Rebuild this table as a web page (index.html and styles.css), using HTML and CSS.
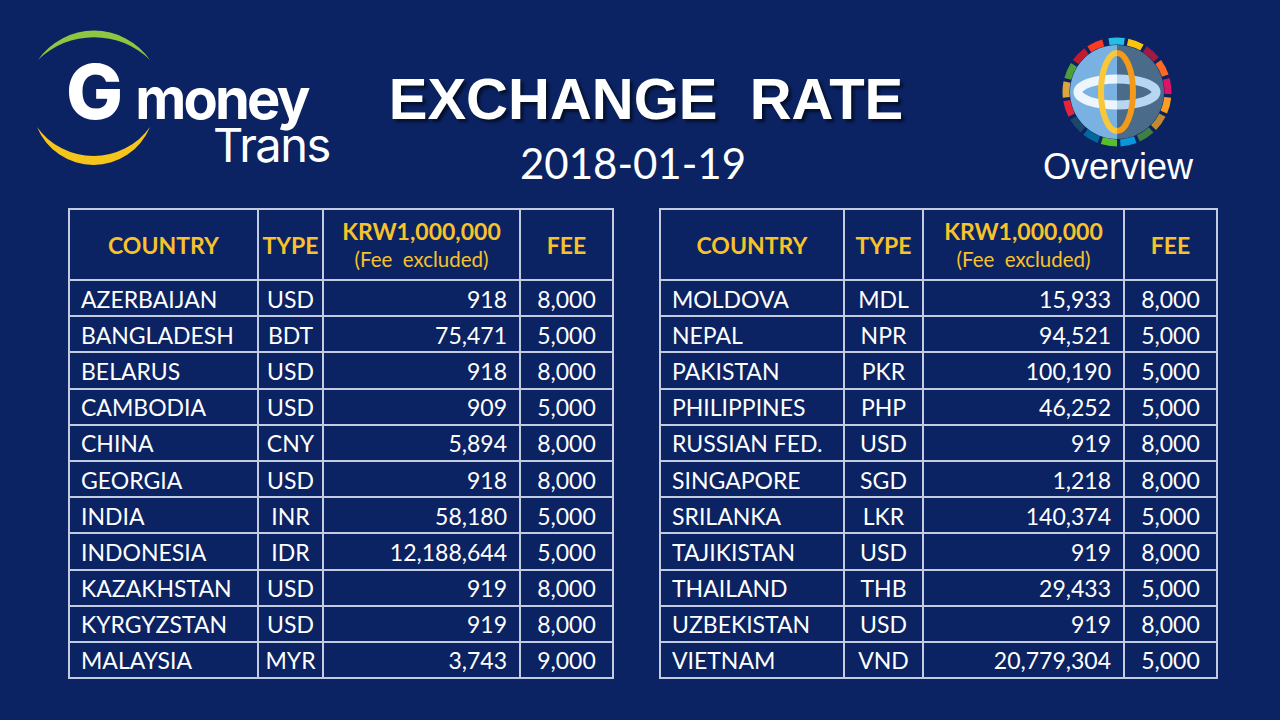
FILE: index.html
```html
<!DOCTYPE html>
<html>
<head>
<meta charset="utf-8">
<link rel="stylesheet" href="styles.css">
</head>
<body>
<div class="slide">
  <header class="header">
    <div class="logo">
      <svg class="logo-arcs" viewBox="0 0 336 208" width="336" height="208">
        <path d="M38,60 A68,68 0 0,1 150,60 A80,80 0 0,0 38,60 Z" fill="#8dc641"/>
        <path d="M37,127 A61,61 0 0,0 150,127 A69.5,69.5 0 0,1 37,127 Z" fill="#f6c51c"/>
      </svg>
      <div class="logo-line1"><span class="logo-g">G</span><span class="logo-money">money</span></div>
      <div class="logo-trans">Trans</div>
    </div>
    <div class="titles">
      <h1 class="title">EXCHANGE&nbsp; RATE</h1>
      <div class="date">2018-01-19</div>
    </div>
    <div class="overview">
      <svg class="globe" viewBox="0 0 110 110" width="110" height="110">
        <g fill="none" stroke-width="7" stroke-dasharray="15.4 305">
          <circle cx="55" cy="55" r="51" stroke="#26bde2" transform="rotate(-99 55 55)"/>
          <circle cx="55" cy="55" r="51" stroke="#fcc30b" transform="rotate(-78 55 55)"/>
          <circle cx="55" cy="55" r="51" stroke="#a21942" transform="rotate(-57 55 55)"/>
          <circle cx="55" cy="55" r="51" stroke="#fd6925" transform="rotate(-36 55 55)"/>
          <circle cx="55" cy="55" r="51" stroke="#dd1367" transform="rotate(-15 55 55)"/>
          <circle cx="55" cy="55" r="51" stroke="#fd9d24" transform="rotate(6 55 55)"/>
          <circle cx="55" cy="55" r="51" stroke="#bf8b2e" transform="rotate(27 55 55)"/>
          <circle cx="55" cy="55" r="51" stroke="#3f7e44" transform="rotate(48 55 55)"/>
          <circle cx="55" cy="55" r="51" stroke="#0a97d9" transform="rotate(69 55 55)"/>
          <circle cx="55" cy="55" r="51" stroke="#56c02b" transform="rotate(90 55 55)"/>
          <circle cx="55" cy="55" r="51" stroke="#00689d" transform="rotate(111 55 55)"/>
          <circle cx="55" cy="55" r="51" stroke="#19486a" transform="rotate(132 55 55)"/>
          <circle cx="55" cy="55" r="51" stroke="#e5243b" transform="rotate(153 55 55)"/>
          <circle cx="55" cy="55" r="51" stroke="#dda63a" transform="rotate(174 55 55)"/>
          <circle cx="55" cy="55" r="51" stroke="#4c9f38" transform="rotate(195 55 55)"/>
          <circle cx="55" cy="55" r="51" stroke="#c5192d" transform="rotate(216 55 55)"/>
          <circle cx="55" cy="55" r="51" stroke="#ff3a21" transform="rotate(237 55 55)"/>
        </g>
        <path d="M55,8 A47,47 0 0,0 55,102 Z" fill="#79b2e2"/>
        <path d="M55,8 A47,47 0 0,1 55,102 Z" fill="#4b6b8a"/>
        <path d="M55,42 A39,13 0 0,0 55,68" fill="none" stroke="#eef6fd" stroke-width="9"/>
        <path d="M55,42 A39,13 0 0,1 55,68" fill="none" stroke="#b7d6f2" stroke-width="9"/>
        <path d="M55,16 A16,39 0 0,0 55,94" fill="none" stroke="#f8c73a" stroke-width="6"/>
        <path d="M55,16 A16,39 0 0,1 55,94" fill="none" stroke="#f39a1b" stroke-width="6"/>
      </svg>
      <div class="overview-text">Overview</div>
    </div>
  </header>

  <main class="tables">
    <table class="rate rate-left">
      <colgroup><col class="c1"><col class="c2"><col class="c3"><col class="c4"></colgroup>
      <thead>
        <tr><th>COUNTRY</th><th>TYPE</th><th><span class="krw">KRW1,000,000</span><span class="excl">(Fee&nbsp; excluded)</span></th><th>FEE</th></tr>
      </thead>
      <tbody>
        <tr><td>AZERBAIJAN</td><td>USD</td><td>918</td><td>8,000</td></tr>
        <tr><td>BANGLADESH</td><td>BDT</td><td>75,471</td><td>5,000</td></tr>
        <tr><td>BELARUS</td><td>USD</td><td>918</td><td>8,000</td></tr>
        <tr><td>CAMBODIA</td><td>USD</td><td>909</td><td>5,000</td></tr>
        <tr><td>CHINA</td><td>CNY</td><td>5,894</td><td>8,000</td></tr>
        <tr><td>GEORGIA</td><td>USD</td><td>918</td><td>8,000</td></tr>
        <tr><td>INDIA</td><td>INR</td><td>58,180</td><td>5,000</td></tr>
        <tr><td>INDONESIA</td><td>IDR</td><td>12,188,644</td><td>5,000</td></tr>
        <tr><td>KAZAKHSTAN</td><td>USD</td><td>919</td><td>8,000</td></tr>
        <tr><td>KYRGYZSTAN</td><td>USD</td><td>919</td><td>8,000</td></tr>
        <tr><td>MALAYSIA</td><td>MYR</td><td>3,743</td><td>9,000</td></tr>
      </tbody>
    </table>
    <table class="rate rate-right">
      <colgroup><col class="c1"><col class="c2"><col class="c3"><col class="c4"></colgroup>
      <thead>
        <tr><th>COUNTRY</th><th>TYPE</th><th><span class="krw">KRW1,000,000</span><span class="excl">(Fee&nbsp; excluded)</span></th><th>FEE</th></tr>
      </thead>
      <tbody>
        <tr><td>MOLDOVA</td><td>MDL</td><td>15,933</td><td>8,000</td></tr>
        <tr><td>NEPAL</td><td>NPR</td><td>94,521</td><td>5,000</td></tr>
        <tr><td>PAKISTAN</td><td>PKR</td><td>100,190</td><td>5,000</td></tr>
        <tr><td>PHILIPPINES</td><td>PHP</td><td>46,252</td><td>5,000</td></tr>
        <tr><td>RUSSIAN FED.</td><td>USD</td><td>919</td><td>8,000</td></tr>
        <tr><td>SINGAPORE</td><td>SGD</td><td>1,218</td><td>8,000</td></tr>
        <tr><td>SRILANKA</td><td>LKR</td><td>140,374</td><td>5,000</td></tr>
        <tr><td>TAJIKISTAN</td><td>USD</td><td>919</td><td>8,000</td></tr>
        <tr><td>THAILAND</td><td>THB</td><td>29,433</td><td>5,000</td></tr>
        <tr><td>UZBEKISTAN</td><td>USD</td><td>919</td><td>8,000</td></tr>
        <tr><td>VIETNAM</td><td>VND</td><td>20,779,304</td><td>5,000</td></tr>
      </tbody>
    </table>
  </main>
</div>
</body>
</html>
```

FILE: styles.css
```css
html, body {
  margin: 0;
  padding: 0;
}
body {
  background: #0b2362;
  width: 1280px;
  height: 720px;
  overflow: hidden;
}
.slide {
  width: 1280px;
  height: 720px;
  background: #0b2362;
  color: #ffffff;
}
.header {
  display: flex;
  height: 208px;
}
.logo {
  position: relative;
  width: 336px;
  height: 208px;
  flex: none;
}
.logo-arcs {
  position: absolute;
  left: 0;
  top: 0;
}
.logo-line1 {
  position: relative;
  display: flex;
  align-items: baseline;
  padding-left: 66px;
  padding-top: 58px;
  height: 66px;
  font-family: Inter, "Open Sans", sans-serif;
}
.logo-g {
  font-size: 76px;
  font-weight: 800;
  line-height: 66px;
  letter-spacing: -1px;
}
.logo-money {
  font-size: 56px;
  font-weight: 700;
  line-height: 66px;
  letter-spacing: -2.8px;
  margin-left: 13px;
}
.logo-trans {
  position: relative;
  font-family: Inter, "Open Sans", sans-serif;
  font-size: 47px;
  font-weight: 400;
  line-height: 40px;
  letter-spacing: -1.5px;
  padding-left: 213px;
  margin-top: 1px;
}
.titles {
  width: 620px;
  flex: none;
  text-align: center;
}
.title {
  margin: 0;
  padding-top: 70px;
  font-family: "Liberation Sans", Arial, sans-serif;
  font-weight: 700;
  font-size: 58px;
  line-height: 58px;
  color: #ffffff;
  text-shadow: 3px 3px 3px rgba(0, 0, 0, 0.55);
}
.date {
  margin-top: 14px;
  padding-right: 26px;
  font-family: Lato, "Open Sans", sans-serif;
  font-size: 42px;
  line-height: 42px;
  color: #ffffff;
}
.overview {
  flex: 1;
  display: flex;
  flex-direction: column;
  align-items: center;
  padding-top: 37px;
}
.globe {
  display: block;
  margin-right: 2px;
}
.overview-text {
  margin-top: 2px;
  font-family: "Liberation Sans", Arial, sans-serif;
  font-size: 36px;
  line-height: 36px;
  color: #ffffff;
}
.tables {
  display: flex;
  gap: 45px;
  padding-left: 68px;
}
.rate {
  border-collapse: collapse;
  table-layout: fixed;
  font-family: Lato, "Open Sans", sans-serif;
  font-size: 23px;
  color: #ffffff;
}
.rate-left { width: 544px; }
.rate-right { width: 557px; }
.rate-left .c1 { width: 189px; }
.rate-left .c2 { width: 65px; }
.rate-left .c3 { width: 197px; }
.rate-left .c4 { width: 93px; }
.rate-right .c1 { width: 184px; }
.rate-right .c2 { width: 79px; }
.rate-right .c3 { width: 201px; }
.rate-right .c4 { width: 93px; }
.rate th, .rate td {
  border: 2px solid #c3cbe0;
  padding: 0;
  white-space: nowrap;
  overflow: hidden;
}
.rate th {
  height: 69px;
  color: #f7c22a;
  font-weight: 700;
  text-align: center;
  vertical-align: middle;
  line-height: 26px;
}
.rate th .krw {
  display: block;
  padding-top: 2px;
}
.rate th .excl {
  display: block;
  font-weight: 400;
  font-size: 20.5px;
  line-height: 30px;
}
.rate td {
  height: 33.2px;
  line-height: 26px;
  text-align: center;
  vertical-align: middle;
  padding-top: 1px;
}
.rate td:first-child {
  text-align: left;
  padding-left: 11px;
}
.rate td:nth-child(3) {
  text-align: right;
  padding-right: 12px;
}
```
